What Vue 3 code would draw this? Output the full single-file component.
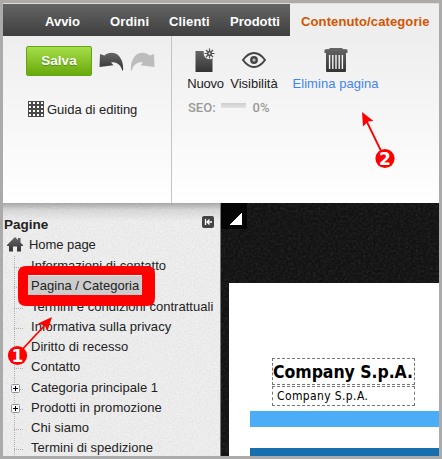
<script setup>
const tabs = [
  { label: 'Avvio', cls: 'avvio' },
  { label: 'Ordini', cls: 'ordini' },
  { label: 'Clienti', cls: 'clienti' },
  { label: 'Prodotti', cls: 'prodotti' },
]
const pages = [
  { label: 'Informazioni di contatto' },
  { label: 'Pagina / Categoria', selected: true },
  { label: 'Termini e condizioni contrattuali' },
  { label: 'Informativa sulla privacy' },
  { label: 'Diritto di recesso' },
  { label: 'Contatto' },
  { label: 'Categoria principale 1', children: true },
  { label: 'Prodotti in promozione', children: true },
  { label: 'Chi siamo' },
  { label: 'Termini di spedizione' },
]
</script>

<template>
  <div class="frame">
    <nav class="nav">
      <div class="tabs">
        <span v-for="t in tabs" :key="t.label" class="tab" :class="t.cls">{{ t.label }}</span>
      </div>
      <span class="active">Contenuto/categorie</span>
    </nav>

    <section class="toolbar">
      <div class="left">
        <div class="save-row">
          <button class="save">Salva</button>
          <svg class="undo" width="25" height="19" viewBox="0 0 25 19">
            <defs>
              <linearGradient id="dark" x1="0" y1="0" x2="0" y2="1"><stop offset="0" stop-color="#666" /><stop offset="1" stop-color="#333" /></linearGradient>
            </defs>
            <path fill="url(#dark)" d="M1 2L5.500 3.500C9 0 16-.500 20 4 23.500 8 24.500 13 24 18.500H23.200C22 13 17.500 9 12 10.500L14.500 13.200.500 15z" />
          </svg>
          <svg class="redo" width="25" height="19" viewBox="0 0 25 19">
            <path fill="#bcbcbc" d="M24 2L19.500 3.500C16 0 9-.500 5 4 1.500 8 .500 13 1 18.500H1.800C3 13 7.500 9 13 10.500L10.500 13.200 24.500 15z" />
          </svg>
        </div>
        <div class="guide">
          <svg width="16" height="16" viewBox="0 0 16 16">
            <path fill="#484848" d="M0 0h16v16H0z" />
            <g fill="#fff">
              <template v-for="r in 4" :key="r">
                <rect v-for="c in 4" :key="c" :x="c * 4 - 3" :y="r * 4 - 3" width="2" height="2" />
              </template>
            </g>
          </svg>
          <span>Guida di editing</span>
        </div>
      </div>
      <div class="right">
        <div class="actions">
          <div class="action nuovo">
            <svg width="22" height="26" viewBox="0 0 22 26">
              <path fill="url(#dark)" d="M.500 3h8l1 4 3 3h5v14h-17z" />
              <circle cx="14.500" cy="5.500" r="5.800" fill="#efefef" />
              <path stroke="#505050" stroke-width="1.200" d="M14.500.500v10M9.500 5.500h10M11 2l7 7M18 2l-7 7" />
              <circle cx="14.500" cy="5.500" r="2.500" fill="#505050" />
              <circle cx="14.500" cy="5.500" r="1" fill="#eee" />
            </svg>
            <span>Nuovo</span>
          </div>
          <div class="action vis">
            <svg width="26" height="26" viewBox="0 0 26 26">
              <path fill="none" stroke="#444" stroke-width="2" d="M2 12Q7 5 13 5T24 12Q19 19 13 19T2 12z" />
              <circle cx="13" cy="12" r="2.700" fill="none" stroke="#444" stroke-width="2.400" />
              <circle cx="13" cy="12" r="0.800" fill="#777" />
            </svg>
            <span>Visibilità</span>
          </div>
          <div class="action del">
            <svg width="24" height="26" viewBox="0 0 24 26">
              <path fill="url(#dark)" d="M.500 2Q1 1 5 1L6 0h12l1 1q4 0 4.500 1v3H22v18.500l-1 .500H3l-1-.500V5H.500z" />
              <path stroke="#f4f4f4" stroke-width="1.400" d="M5.600 7v14M8.800 7v14M12 7v14M15.200 7v14M18.400 7v14" />
            </svg>
            <span>Elimina pagina</span>
          </div>
        </div>
        <div class="seo"><span>SEO:</span><i></i><span class="pct">0%</span></div>
      </div>
    </section>

    <main class="body">
      <aside class="side">
        <svg class="grain" width="217" height="253">
          <filter id="paper"><feTurbulence type="fractalNoise" baseFrequency="0.55" numOctaves="2" /><feColorMatrix values="0 0 0 0 0  0 0 0 0 0  0 0 0 0 0  .07 .07 0 0 -.055" /></filter>
          <rect width="217" height="253" filter="url(#paper)" />
        </svg>
        <header class="head">
          <b>Pagine</b>
          <svg width="12" height="12" viewBox="0 0 12 12">
            <rect width="12" height="12" rx="2" fill="#444" />
            <path d="M3.500 3v6M10 6H6M7.500 3.500L5 6l2.500 2.500" stroke="#fff" stroke-width="1.300" fill="none" />
          </svg>
        </header>
        <div class="home">
          <svg width="16" height="15" viewBox="0 0 16 15">
            <path fill="url(#dark)" d="M8 0l3 3V1h2.500v4.500L16 8v1h-2v5.500h-4V9.500H6v5H2V9H0V8z" />
          </svg>
          <span>Home page</span>
        </div>
        <ul class="tree">
          <li v-for="p in pages" :key="p.label">
            <span class="branch">
              <svg v-if="p.children" width="9" height="9" viewBox="0 0 9 9">
                <rect x=".5" y=".5" width="8" height="8" rx="1" fill="#f8f8f8" stroke="#8c92a0" />
                <path d="M2 4.500h5M4.500 2v5" stroke="#000" />
              </svg>
            </span>
            <span class="name" :class="{ selected: p.selected }">{{ p.label }}</span>
          </li>
        </ul>
      </aside>

      <div class="stage">
        <svg class="grain" width="218" height="253">
          <filter id="leather"><feTurbulence type="fractalNoise" baseFrequency="0.4" numOctaves="3" /><feColorMatrix values="0 0 0 0 1  0 0 0 0 1  0 0 0 0 1  .1 .1 0 0 -.08" /></filter>
          <rect width="218" height="253" filter="url(#leather)" />
        </svg>
        <div class="corner"><svg width="12" height="12" shape-rendering="crispEdges"><path d="M12 0v12H0v-1z" fill="#fff" /></svg></div>
        <article class="page">
          <h1>Company S.p.A.</h1>
          <p>Company S.p.A.</p>
          <div class="band light"></div>
          <div class="band deep"></div>
        </article>
      </div>
    </main>

    <svg class="notes" width="442" height="459" viewBox="0 0 442 459">
      <path fill="#f00" fill-rule="evenodd" d="M26 266H147Q155 266 155 274V298Q155 306 147 306H26Q18 306 18 298V274Q18 266 26 266zM28 275V295H142V275z" />
      <g stroke="#f00" stroke-width="1.800"><path d="M18 354L46 324M384 157L366 120" /></g>
      <path fill="#f00" d="M52 317l-4.500 14-2.500-5-7-2.500zM362 112l11.500 9-5.500.500-5 5z" />
      <circle cx="17.500" cy="355.500" r="9.600" fill="#f00" /><circle cx="385" cy="158.500" r="9.600" fill="#f00" />
      <text x="17.500" y="361.500" class="num">1</text><text x="385" y="164.500" class="num">2</text>
    </svg>
  </div>
</template>

<style>
body { margin: 0; overflow: hidden; }
</style>
<style scoped>
.frame { position: relative; box-sizing: border-box; width: 442px; height: 459px; border: 3px solid #ababab; overflow: hidden; font: 13px/16px "Liberation Sans", Arial, sans-serif; color: #222; background: #fff; display: flex; flex-direction: column; }
.nav { display: flex; height: 33px; flex: none; box-sizing: border-box; border-top: 1px solid #eadbc9; background: #eee; font-weight: bold; line-height: 36px; }
.tabs { width: 287px; box-sizing: border-box; padding-left: 42px; display: flex; background: linear-gradient(#646464, #3f3f3f); color: #fff; }
.tab { white-space: nowrap; }
.avvio { width: 65px; } .ordini { width: 59px; letter-spacing: .15px; } .clienti { width: 61px; letter-spacing: .15px; }
.active { color: #d35400; padding-left: 11px; white-space: nowrap; letter-spacing: .12px; }
.toolbar { height: 167px; flex: none; display: flex; background: linear-gradient(#eee, #fff); }
.left { width: 169px; box-sizing: border-box; padding: 10px 0 0 23px; border-right: 1px solid #c4c4c4; }
.save-row { display: flex; height: 30px; }
.save { width: 66px; height: 30px; box-sizing: border-box; padding: 0; border: 1px solid #65a415; border-radius: 2px; background: linear-gradient(#a5de49, #68a90b); color: #fff; font: bold 13.500px/28px "Liberation Sans", Arial, sans-serif; text-shadow: 0 1px 1px #538d12; }
.undo { margin: 6px 0 0 7px; } .redo { margin: 6px 0 0 6px; }
.guide { display: flex; gap: 3px; margin: 25px 0 0 2px; line-height: 17px; }
.right { padding: 12px 0 0 15px; }
.actions { display: flex; }
.action { display: flex; flex-direction: column; align-items: center; line-height: 19px; white-space: nowrap; height: 46px; }
.nuovo { width: 37px; letter-spacing: -.25px; } .vis { width: 50px; margin-left: 5px; } .del { width: 87px; margin-left: 13px; color: #4384ee; letter-spacing: .05px; }
.action svg { flex: none; }
.seo { display: flex; color: #999; margin: 5px 0 0 1px; }
.seo i { width: 25px; height: 5px; background: linear-gradient(#cfcfcf, #e2e2e2); margin: 4px 7px 0 5px; }
.seo span { font: 500 13px/18px Roboto, sans-serif; }
.body { flex: 1; display: flex; min-height: 0; }
.side { position: relative; width: 218px; box-sizing: border-box; border-right: 1px solid #737b7b; background: linear-gradient(#aaa, #d9d9d9 7px, #efefef 18px, #efefef); }
.grain { position: absolute; left: 0; top: 0; }
.head { position: relative; display: flex; justify-content: space-between; padding: 13px 6px 0 1px; font-size: 13.500px; line-height: 18px; }
.home { position: relative; display: flex; gap: 6px; padding: 3px 0 0 4px; height: 18px; line-height: 16px; letter-spacing: -.05px; }
.tree { position: relative; margin: 1px 0 0 11px; padding: 0; list-style: none; }
.tree li { display: flex; height: 20.25px; align-items: center; white-space: nowrap; letter-spacing: .03px; }
.branch { position: relative; width: 14px; height: 20.25px; box-sizing: border-box; flex: none; background: repeating-linear-gradient(#b0b0b0 0 1px, transparent 1px 2px) 0 0 / 1px 100% no-repeat, repeating-linear-gradient(90deg, #b0b0b0 0 1px, transparent 1px 2px) 0 11px / 10px 1px no-repeat; }
.branch svg { position: absolute; left: -3px; top: 6px; }
.name { padding: 0 3px; }
.selected { background: #ccc; line-height: 20px; width: 108px; }
.stage { position: relative; flex: 1; background: #121212; display: flex; flex-direction: column; overflow: hidden; }
.corner { position: relative; width: 26px; height: 26px; background: #050505; flex: none; }
.corner svg { display: block; margin: 10px 0 0 9px; }
.page { position: relative; flex: 1; margin: 54px 0 0 8px; background: #fff; color: #000; padding: 75px 0 0 21px; }
.page h1, .page p { box-sizing: border-box; width: 143px; margin: 0 0 1px 22px; border: 1px dashed #777; white-space: nowrap; }
.page h1 { height: 27px; font: bold 17.500px/26px "DejaVu Sans Condensed", "DejaVu Sans", sans-serif; font-stretch: condensed; letter-spacing: -.05px; }
.page p { height: 20px; padding-left: 4px; font: 12px/19px "DejaVu Sans Condensed", "DejaVu Sans", sans-serif; font-stretch: condensed; letter-spacing: .38px; }
.light { height: 16px; background: #4badf8; margin-top: 5px; }
.deep { height: 12px; background: #1770ad; margin-top: 21px; }
.notes { position: absolute; left: -3px; top: -3px; }
.num { fill: #fff; font: bold 17px "DejaVu Sans", sans-serif; text-anchor: middle; }
</style>
